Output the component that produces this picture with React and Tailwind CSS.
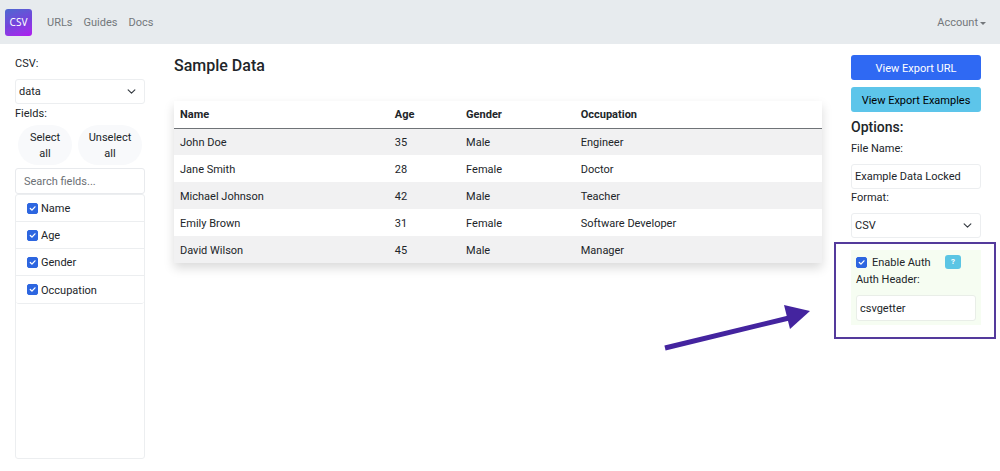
import React, { useState } from 'react';

const people = [
  { name: 'John Doe', age: 35, gender: 'Male', occupation: 'Engineer' },
  { name: 'Jane Smith', age: 28, gender: 'Female', occupation: 'Doctor' },
  { name: 'Michael Johnson', age: 42, gender: 'Male', occupation: 'Teacher' },
  { name: 'Emily Brown', age: 31, gender: 'Female', occupation: 'Software Developer' },
  { name: 'David Wilson', age: 45, gender: 'Male', occupation: 'Manager' },
];

const fieldNames = ['Name', 'Age', 'Gender', 'Occupation'];

const Header = () => (
  <header className="bg-[#e7ebee]">
    <nav className="flex h-11 items-center pl-[5px] pr-3.5 text-[#73777b]">
      <a
        href="#"
        className="flex size-[27px] items-center justify-center rounded-[3px] bg-linear-160 from-[#4a68d0] via-[#7343dc] to-[#b014f0] font-['Noto_Sans',sans-serif] text-[10px] text-white"
      >
        CSV
      </a>
      <div className="ml-[15px] flex gap-[11px] pt-0.5">
        <a href="#urls">URLs</a>
        <a href="#guides">Guides</a>
        <a href="#docs">Docs</a>
      </div>
      <button className="ml-auto flex items-center gap-0.5 pt-0.5">
        Account
        <svg className="h-[3px] w-1.5" viewBox="0 0 6 3" fill="currentColor">
          <path d="M0 0h6L3 3z" />
        </svg>
      </button>
    </nav>
  </header>
);

const Select = ({ id, options }) => (
  <div className="relative">
    <select
      id={id}
      className="block h-[25px] w-full appearance-none rounded-[3px] border border-[#eceef0] bg-white px-[3px]"
    >
      {options.map((option) => (
        <option key={option}>{option}</option>
      ))}
    </select>
    <svg
      className="pointer-events-none absolute right-[9px] top-2 size-[9px]"
      viewBox="0 0 16 16"
      fill="none"
      stroke="#343a40"
      strokeWidth="2"
      strokeLinecap="round"
      strokeLinejoin="round"
    >
      <path d="m2 5 6 6 6-6" />
    </svg>
  </div>
);

const Checkbox = ({ id, checked, onChange }) => (
  <span className="relative block size-[11px] shrink-0">
    <input
      id={id}
      type="checkbox"
      checked={checked}
      onChange={onChange}
      className="block size-[11px] appearance-none rounded-[2px] border border-gray-300 bg-white checked:border-[#2d66e0] checked:bg-[#2d66e0]"
    />
    {checked && (
      <svg
        className="pointer-events-none absolute inset-0 size-[11px]"
        viewBox="0 0 20 20"
        fill="none"
        stroke="#fff"
        strokeWidth="2.4"
        strokeLinecap="round"
        strokeLinejoin="round"
      >
        <path d="m6 10 3 3 5.5-6" />
      </svg>
    )}
  </span>
);

const FieldsPanel = () => {
  const [selected, setSelected] = useState(fieldNames);
  const [query, setQuery] = useState('');

  const toggle = (field) =>
    setSelected(
      selected.includes(field) ? selected.filter((f) => f !== field) : [...selected, field]
    );
  const visible = fieldNames.filter((f) => f.toLowerCase().includes(query.toLowerCase()));

  return (
    <aside className="w-[130px] shrink-0 pt-3">
      <label htmlFor="csv" className="mb-[7px] block">
        CSV:
      </label>
      <Select id="csv" options={['data']} />
      <p className="mt-0.5">Fields:</p>
      <div className="mt-[3px] flex gap-1.5 px-[3px]">
        <button
          onClick={() => setSelected(fieldNames)}
          className="w-[54px] rounded-full bg-[#f8f9fb] px-2.5 pb-[3px] pt-[5px]"
        >
          Select all
        </button>
        <button
          onClick={() => setSelected([])}
          className="w-16 rounded-full bg-[#f8f9fb] px-1.5 pb-[3px] pt-[5px]"
        >
          Unselect all
        </button>
      </div>
      <input
        type="text"
        aria-label="Search fields"
        placeholder="Search fields..."
        value={query}
        onChange={(e) => setQuery(e.target.value)}
        className="mt-[3px] block h-[26px] w-full rounded-[3px] border border-[#e8eaed] px-2 placeholder:text-[#6c7075]"
      />
      <div className="h-[265px] rounded-[3px] border border-[#eceef0]">
        <ul className="divide-y divide-[#eceef0] rounded-[3px] border-b border-[#eceef0]">
          {visible.map((field) => (
            <li key={field} className="flex h-[27px] items-center gap-[3px] pl-[11px]">
              <Checkbox
                id={`field-${field}`}
                checked={selected.includes(field)}
                onChange={() => toggle(field)}
              />
              <label htmlFor={`field-${field}`} className="pt-0.5">
                {field}
              </label>
            </li>
          ))}
        </ul>
      </div>
    </aside>
  );
};

const DataTable = () => (
  <main className="min-w-0 flex-1 pt-3">
    <h1 className="text-base/5 font-medium">Sample Data</h1>
    <table className="mt-[25px] w-full table-fixed text-left shadow-[0_5px_10px_rgba(0,0,0,0.15)]">
      <thead>
        <tr className="h-[27px] border-b border-[#6f7377]">
          <th className="w-[33%] px-1.5 pt-0.5 font-bold">Name</th>
          <th className="w-[11%] px-[7px] pt-0.5 font-bold">Age</th>
          <th className="w-[18%] px-[7px] pt-0.5 font-bold">Gender</th>
          <th className="px-[5px] pt-0.5 font-bold">Occupation</th>
        </tr>
      </thead>
      <tbody>
        {people.map((person) => (
          <tr key={person.name} className="h-[27px] odd:bg-[#f1f1f2]">
            <td className="px-1.5 pt-0.5">{person.name}</td>
            <td className="px-[7px] pt-0.5">{person.age}</td>
            <td className="px-[7px] pt-0.5">{person.gender}</td>
            <td className="px-[5px] pt-0.5">{person.occupation}</td>
          </tr>
        ))}
      </tbody>
    </table>
  </main>
);

const AuthOptions = () => {
  const [enabled, setEnabled] = useState(true);

  return (
    <section className="relative mt-3 bg-[#f6fdf2] px-[5px] pb-1 pt-[3px]">
      <div className="flex items-center">
        <Checkbox id="auth" checked={enabled} onChange={() => setEnabled(!enabled)} />
        <label htmlFor="auth" className="ml-[5px] pt-0.5">
          Enable Auth
        </label>
        <button
          aria-label="About auth"
          className="ml-auto mr-[15px] h-3.5 w-4 rounded-[3px] bg-[#5bc5e4] text-[8px]/3 font-bold text-white"
        >
          ?
        </button>
      </div>
      <label htmlFor="auth-header" className="mb-[7px] mt-px block">
        Auth Header:
      </label>
      <input
        id="auth-header"
        type="text"
        defaultValue="csvgetter"
        className="block h-[26px] w-full rounded-[3px] border border-[#e9eee8] bg-white px-[3px]"
      />
      {/* callout frame and arrow */}
      <div className="pointer-events-none absolute -bottom-3.5 -left-[17px] -right-[15px] -top-2 border-2 border-[#543a9c]" />
      <svg
        className="pointer-events-none absolute right-[170px] top-[54px] h-[48px] w-[148px]"
        viewBox="0 0 148 48"
      >
        <path d="M2 44 126 14" stroke="#44249f" strokeWidth="5" />
        <path d="m121 1 26 6-20 18z" fill="#44249f" />
      </svg>
    </section>
  );
};

const ExportPanel = () => (
  <aside className="w-[130px] shrink-0 pt-[11px]">
    <button className="block h-[25px] w-full rounded-[3px] bg-[#2f69f3] pt-0.5 text-white">
      View Export URL
    </button>
    <button className="mt-[7px] block h-[25px] w-full rounded-[3px] bg-[#5dc5ea] pt-0.5 text-black">
      View Export Examples
    </button>
    <h2 className="mt-[5px] text-sm/5 font-medium">Options:</h2>
    <label htmlFor="file-name" className="mb-[7px] mt-1 block">
      File Name:
    </label>
    <input
      id="file-name"
      type="text"
      defaultValue="Example Data Locked"
      className="block h-[25px] w-full rounded-[3px] border border-[#eceef0] px-[3px]"
    />
    <label htmlFor="format" className="mb-[7px] mt-px block">
      Format:
    </label>
    <Select id="format" options={['CSV', 'JSON']} />
    <AuthOptions />
  </aside>
);

const App = () => (
  <div className="bg-white font-['Roboto',sans-serif] text-[11px]/4 text-[#212529]">
    <Header />
    <div className="flex gap-[29px] pl-[15px] pr-[19px]">
      <FieldsPanel />
      <DataTable />
      <ExportPanel />
    </div>
  </div>
);

export default App;
